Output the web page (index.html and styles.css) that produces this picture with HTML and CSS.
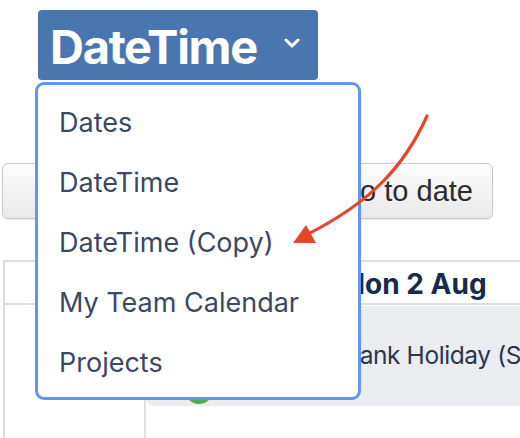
FILE: index.html
```html
<!DOCTYPE html>
<html lang="en">
<head>
<meta charset="utf-8">
<title>Calendar switcher</title>
<link rel="stylesheet" href="styles.css">
</head>
<body>
<div class="page">
  <div class="toolbar">
    <button class="cal-select" type="button">
      <span class="cal-select-label">DateTime</span>
      <svg class="chevron" width="16" height="10" viewBox="0 0 16 10" aria-hidden="true"><path d="M2 2 L8 8 L14 2" fill="none" stroke="#fff" stroke-width="3" stroke-linecap="round" stroke-linejoin="round"/></svg>
    </button>
  </div>

  <div class="nav-row">
    <button class="goto" type="button">Go to date</button>
  </div>

  <div class="calendar">
    <div class="cal-head">
      <div class="gutter"></div>
      <div class="day-head">Mon 2 Aug</div>
    </div>
    <div class="cal-body">
      <div class="gutter"></div>
      <div class="day-col">
        <div class="event">
          <span class="event-dot"></span>
          <span class="event-title">Bank Holiday (Scotland)</span>
        </div>
      </div>
    </div>
  </div>

  <ul class="menu">
    <li class="menu-item">Dates</li>
    <li class="menu-item">DateTime</li>
    <li class="menu-item">DateTime (Copy)</li>
    <li class="menu-item">My Team Calendar</li>
    <li class="menu-item">Projects</li>
  </ul>

  <svg class="annotation" width="520" height="438" viewBox="0 0 520 438" aria-hidden="true">
    <path d="M427 116 C405 165 372 202 306 235" fill="none" stroke="#e8432b" stroke-width="3.2" stroke-linecap="round"/>
    <polygon points="293,243 306,225 316,243" fill="#e8432b"/>
  </svg>
</div>
</body>
</html>
```

FILE: styles.css
```css
* { box-sizing: border-box; }

html, body {
  margin: 0;
  padding: 0;
  background: #fff;
  overflow: hidden;
}

.page {
  position: relative;
  width: 520px;
  height: 438px;
  overflow: hidden;
  padding-top: 10px;
  font-family: Inter, "Noto Sans", "Liberation Sans", sans-serif;
}

.toolbar {
  display: flex;
  padding-left: 38px;
}

.cal-select {
  display: flex;
  align-items: center;
  gap: 27px;
  height: 70px;
  width: 280px;
  padding: 0 18px 0 12px;
  border: 0;
  border-radius: 4px;
  background: #4a76b0;
  color: #fff;
  font-family: Inter, "Liberation Sans", sans-serif;
  font-weight: 700;
  font-size: 47px;
  letter-spacing: -1.3px;
  line-height: 1;
}

.cal-select-label { padding-top: 2px; }

.chevron { flex: none; margin-top: -4px; }

.nav-row {
  display: flex;
  padding-left: 2px;
  margin-top: 83px;
}

.goto {
  width: 491px;
  height: 56px;
  display: flex;
  align-items: center;
  justify-content: flex-end;
  padding: 0 19px 0 0;
  border: 1px solid #c9c9c9;
  border-radius: 6px;
  background: linear-gradient(#fdfdfd, #e9e9e9);
  box-shadow: 0 1px 1px rgba(0,0,0,0.08);
  color: #2b2b2b;
  font-family: "Liberation Sans", Arial, sans-serif;
  font-size: 29px;
}

.calendar {
  margin-top: 41px;
  margin-left: 3px;
  width: 620px;
  border-top: 2px solid #dedede;
  border-left: 2px solid #dedede;
}

.cal-head {
  display: flex;
  height: 43px;
  border-bottom: 2px solid #dedede;
}

.gutter {
  width: 141px;
  flex: none;
  border-right: 2px solid #dedede;
}

.day-head {
  flex: 1;
  padding-left: 193px;
  padding-top: 5px;
  font-size: 28px;
  font-weight: 700;
  color: #172b4d;
}

.cal-body {
  display: flex;
  height: 140px;
}

.day-col {
  flex: 1;
  padding: 1px 0 0 1px;
}

.event {
  display: flex;
  align-items: center;
  height: 100px;
  padding-left: 38px;
  border-radius: 0 0 0 6px;
  background: #ebecf0;
  overflow: hidden;
}

.event-dot {
  flex: none;
  align-self: flex-end;
  width: 28px;
  height: 28px;
  margin-bottom: 2px;
  border-radius: 50%;
  background: #4bae4f;
}

.event-title {
  margin-left: 131px;
  margin-top: -2px;
  font-size: 24.5px;
  letter-spacing: -0.4px;
  color: #283650;
  white-space: nowrap;
}

.menu {
  position: absolute;
  left: 35px;
  top: 82px;
  width: 326px;
  margin: 0;
  padding: 7px 0 5px;
  list-style: none;
  background: #fff;
  border: 3px solid #5e98f3;
  border-radius: 9px;
}

.menu-item {
  display: flex;
  align-items: center;
  height: 60px;
  padding-left: 21px;
  font-size: 27px;
  color: #3b4863;
  white-space: nowrap;
}

.annotation {
  position: absolute;
  left: 0;
  top: 0;
  pointer-events: none;
}
```
